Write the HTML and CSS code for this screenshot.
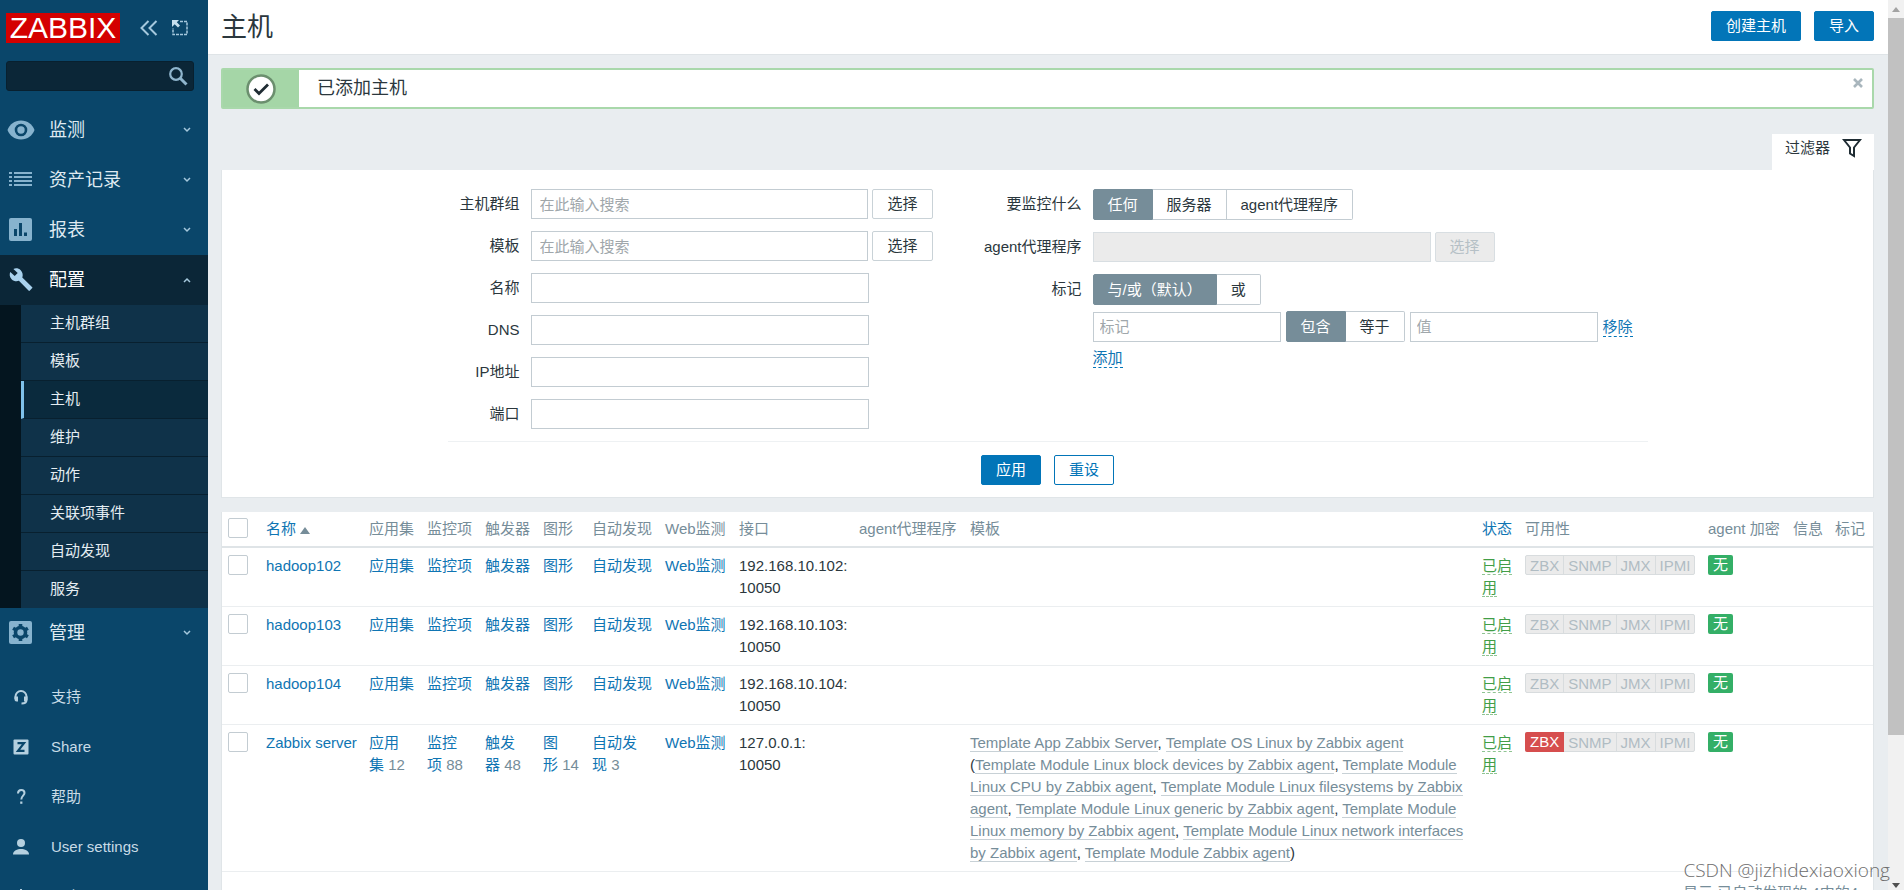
FILE: index.html
```html
<!DOCTYPE html>
<html lang="zh-CN">
<head>
<meta charset="utf-8">
<title>主机</title>
<link rel="stylesheet" href="styles.css">
</head>
<body>
<div class="app">
  <aside class="sidebar">
    <div class="brand">
      <a class="logo" href="#">ZABBIX</a>
      <button class="icon-btn" type="button" aria-label="收起">
        <svg width="20" height="18" viewBox="0 0 20 18"><path d="M9.500 2 2.500 9l7 7M17.500 2l-7 7 7 7" fill="none" stroke="#a5c8dd" stroke-width="2"/></svg>
      </button>
      <button class="icon-btn" type="button" aria-label="隐藏">
        <svg width="18" height="18" viewBox="0 0 18 18"><path d="M9 2.500h7v13H2V9" fill="none" stroke="#a5c8dd" stroke-width="1.500" stroke-dasharray="3 1"/><path d="M1 1h7L5.800 3.200 9 6.500 7 8.500 3.700 5.200 1 8z" fill="#c5dfee"/></svg>
      </button>
    </div>
    <form class="search" role="search">
      <input type="text" aria-label="搜索">
      <button class="search-btn" type="button" aria-label="搜索">
        <svg width="20" height="20" viewBox="0 0 20 20"><circle cx="8" cy="8" r="5.800" fill="none" stroke="#8fb5cd" stroke-width="2.200"/><path d="m12 12 6.500 6.500" stroke="#8fb5cd" stroke-width="3"/></svg>
      </button>
    </form>
    <nav>
      <ul class="menu">
        <li><a class="menu-link" href="#"><svg class="menu-icon" viewBox="0 0 28 28"><path d="M14 4.500C7.500 4.500 2.500 8.500.500 14c2 5.500 7 9.500 13.500 9.500s11.500-4 13.500-9.500c-2-5.500-7-9.500-13.500-9.500z" fill="#87b3ce"/><circle cx="14" cy="14" r="5" fill="none" stroke="#0a466a" stroke-width="2.600"/></svg><span>监测</span><svg class="chev" viewBox="0 0 8 6"><path d="m1 1 3 3 3-3"/></svg></a></li>
        <li><a class="menu-link" href="#"><svg class="menu-icon" viewBox="0 0 28 28"><path d="M2 7h3M2 11h3M2 15h3M2 19h3M7 7h18M7 11h18M7 15h18M7 19h18" stroke="#87b3ce" stroke-width="2"/></svg><span>资产记录</span><svg class="chev" viewBox="0 0 8 6"><path d="m1 1 3 3 3-3"/></svg></a></li>
        <li><a class="menu-link" href="#"><svg class="menu-icon" viewBox="0 0 28 28"><rect x="2" y="2" width="23" height="23" rx="2" fill="#87b3ce"/><path d="M8.500 13v7M13.500 7V20M18.500 16.500V20" stroke="#0a466a" stroke-width="3"/></svg><span>报表</span><svg class="chev" viewBox="0 0 8 6"><path d="m1 1 3 3 3-3"/></svg></a></li>
        <li>
          <a class="menu-link menu-link-open" href="#"><svg class="menu-icon" viewBox="0 0 28 28"><path d="M25 21 15.300 11.500c.9-2.500.4-5.300-1.600-7.300-2-2-4.900-2.400-7.300-1.300l4.300 4.200-3 3L3.300 6c-1.100 2.400-.7 5.200 1.300 7.200s4.900 2.500 7.300 1.600L21.500 24.500c.5.500 1 .5 1.400 0l2.100-2.200c.5-.4.5-1 0-1.300z" fill="#a9d2ee"/></svg><span>配置</span><svg class="chev" viewBox="0 0 8 6"><path d="m1 5 3-3 3 3"/></svg></a>
          <ul class="submenu">
            <li><a href="#">主机群组</a></li>
            <li><a href="#">模板</a></li>
            <li><a class="current" href="#">主机</a></li>
            <li><a href="#">维护</a></li>
            <li><a href="#">动作</a></li>
            <li><a href="#">关联项事件</a></li>
            <li><a href="#">自动发现</a></li>
            <li><a href="#">服务</a></li>
          </ul>
        </li>
        <li><a class="menu-link" href="#"><svg class="menu-icon" viewBox="0 0 28 28"><rect x="2" y="2" width="23" height="23" rx="2" fill="#87b3ce"/><circle cx="13.500" cy="13.500" r="4.800" fill="none" stroke="#0a466a" stroke-width="4"/><path d="M13.500 5v17M6.100 9.200l14.800 8.600M20.900 9.200 6.100 17.800" stroke="#0a466a" stroke-width="3.600"/><circle cx="13.500" cy="13.500" r="3.200" fill="#87b3ce"/></svg><span>管理</span><svg class="chev" viewBox="0 0 8 6"><path d="m1 1 3 3 3-3"/></svg></a></li>
      </ul>
      <ul class="user-menu">
        <li><a href="#"><svg class="user-icon" viewBox="0 0 18 18"><path d="M3.500 11V8.500a5.500 5.500 0 0 1 11 0V12c0 2-1.500 3.500-5 3.500" fill="none" stroke="#b5d0df" stroke-width="2"/><path d="M2.500 8.500H6v5H4.500a2 2 0 0 1-2-2zM12 8.500h3.500v3a2 2 0 0 1-2 2H12z" fill="#b5d0df"/></svg>支持</a></li>
        <li><a href="#"><svg class="user-icon" viewBox="0 0 18 18"><rect x="1.500" y="1.500" width="15" height="15" rx="1" fill="#b5d0df"/><path d="M5.500 5.200h6.500L6 12.800h6.500" fill="none" stroke="#0a466a" stroke-width="2.200"/></svg>Share</a></li>
        <li><a href="#"><svg class="user-icon" viewBox="0 0 18 18"><path d="M6 5.500C6 3 7.500 2 9.200 2c1.800 0 3.300 1 3.300 3 0 2.500-3.200 3-3.200 6.500" fill="none" stroke="#b5d0df" stroke-width="2"/><path d="M8.200 13.500h2.200v2.300H8.200z" fill="#b5d0df"/></svg>帮助</a></li>
        <li><a href="#"><svg class="user-icon" viewBox="0 0 18 18"><circle cx="9" cy="5" r="4" fill="#b5d0df"/><path d="M1 16.500c0-4 4.500-5.500 8-5.500s8 1.500 8 5.500z" fill="#b5d0df"/></svg>User settings</a></li>
        <li><a href="#"><svg class="user-icon" viewBox="0 0 18 18"><path d="M9 1v8M5 4a6 6 0 1 0 8 0" fill="none" stroke="#b5d0df" stroke-width="2"/></svg>退出</a></li>
      </ul>
    </nav>
  </aside>

  <main class="main">
    <header class="page-head">
      <h1>主机</h1>
      <div class="head-actions">
        <button class="btn btn-primary" type="button">创建主机</button>
        <button class="btn btn-primary" type="button">导入</button>
      </div>
    </header>

    <div class="content">
      <div class="message" role="status">
        <div class="message-icon">
          <svg width="32" height="32" viewBox="0 0 32 32"><circle cx="16" cy="16" r="13.500" fill="#fff" stroke="#6b8f6e" stroke-width="2.500"/><path d="m9.500 16 4.500 4.500 9-9" fill="none" stroke="#1f2c33" stroke-width="2.800"/></svg>
        </div>
        <span class="message-text">已添加主机</span>
        <button class="message-close" type="button" aria-label="关闭"><svg width="10" height="10" viewBox="0 0 10 10"><path d="m1 1 8 8M9 1 1 9" stroke="#a9b6bd" stroke-width="2.600"/></svg></button>
      </div>

      <div class="filter-tab">
        <a href="#">过滤器
          <svg width="20" height="20" viewBox="0 0 20 20"><path d="M2 2h16l-6 7.500V18l-4-2.500v-6z" fill="none" stroke="#1f2c33" stroke-width="2"/></svg>
        </a>
      </div>

      <form class="filter">
        <div class="filter-body">
          <div class="filter-col">
            <div class="row"><label for="groups">主机群组</label><div class="field"><input class="text wide" id="groups" type="text" placeholder="在此输入搜索"><button class="btn btn-grey" type="button">选择</button></div></div>
            <div class="row"><label for="templates">模板</label><div class="field"><input class="text wide" id="templates" type="text" placeholder="在此输入搜索"><button class="btn btn-grey" type="button">选择</button></div></div>
            <div class="row"><label for="name">名称</label><div class="field"><input class="text wide" id="name" type="text"></div></div>
            <div class="row"><label for="dns">DNS</label><div class="field"><input class="text wide" id="dns" type="text"></div></div>
            <div class="row"><label for="ip">IP地址</label><div class="field"><input class="text wide" id="ip" type="text"></div></div>
            <div class="row"><label for="port">端口</label><div class="field"><input class="text wide" id="port" type="text"></div></div>
          </div>
          <div class="filter-col filter-col-right">
            <div class="row"><span class="label">要监控什么</span>
              <div class="segment" role="radiogroup" aria-label="要监控什么">
                <input type="radio" name="mon" id="mon-any" checked><label for="mon-any">任何</label>
                <input type="radio" name="mon" id="mon-server"><label for="mon-server">服务器</label>
                <input type="radio" name="mon" id="mon-proxy"><label for="mon-proxy">agent代理程序</label>
              </div>
            </div>
            <div class="row"><label for="proxy">agent代理程序</label><div class="field"><input class="text wide" id="proxy" type="text" disabled><button class="btn btn-grey" type="button" disabled>选择</button></div></div>
            <div class="row row-tags"><span class="label">标记</span>
              <div class="tags">
                <div class="segment" role="radiogroup" aria-label="标记">
                  <input type="radio" name="eval" id="eval-and" checked><label for="eval-and">与/或（默认）</label>
                  <input type="radio" name="eval" id="eval-or"><label for="eval-or">或</label>
                </div>
                <div class="tag-row">
                  <input class="text short" type="text" placeholder="标记" aria-label="标记">
                  <div class="segment" role="radiogroup" aria-label="运算符">
                    <input type="radio" name="op" id="op-like" checked><label for="op-like">包含</label>
                    <input type="radio" name="op" id="op-eq"><label for="op-eq">等于</label>
                  </div>
                  <input class="text short" type="text" placeholder="值" aria-label="值">
                  <button class="link-btn" type="button">移除</button>
                </div>
                <button class="link-btn" type="button">添加</button>
              </div>
            </div>
          </div>
        </div>
        <div class="filter-foot">
          <button class="btn btn-primary" type="button">应用</button>
          <button class="btn btn-outline" type="button">重设</button>
        </div>
      </form>

      <div class="list">
        <table class="hosts">
          <colgroup>
            <col class="c-check"><col class="c-name"><col class="c-item"><col class="c-item"><col class="c-item"><col class="c-graph"><col class="c-disc"><col class="c-web"><col class="c-iface"><col class="c-proxy"><col class="c-tpl"><col class="c-status"><col class="c-avail"><col class="c-enc"><col class="c-info"><col class="c-tags">
          </colgroup>
          <thead>
            <tr>
              <th><input type="checkbox" aria-label="全选"></th>
              <th><a href="#">名称 <span class="sort"></span></a></th>
              <th>应用集</th><th>监控项</th><th>触发器</th><th>图形</th><th>自动发现</th><th>Web监测</th><th>接口</th><th>agent代理程序</th><th>模板</th>
              <th><a href="#">状态</a></th><th>可用性</th><th>agent 加密</th><th>信息</th><th>标记</th>
            </tr>
          </thead>
          <tbody>
            <tr>
              <td><input type="checkbox" aria-label="hadoop102"></td>
              <td><a href="#">hadoop102</a></td>
              <td><a href="#">应用集</a></td><td><a href="#">监控项</a></td><td><a href="#">触发器</a></td><td><a href="#">图形</a></td><td><a href="#">自动发现</a></td><td><a href="#">Web监测</a></td>
              <td>192.168.10.102:<br>10050</td><td></td><td></td>
              <td><a class="enabled" href="#">已启用</a></td>
              <td><span class="avail"><span>ZBX</span><span>SNMP</span><span>JMX</span><span>IPMI</span></span></td>
              <td><span class="enc">无</span></td><td></td><td></td>
            </tr>
            <tr>
              <td><input type="checkbox" aria-label="hadoop103"></td>
              <td><a href="#">hadoop103</a></td>
              <td><a href="#">应用集</a></td><td><a href="#">监控项</a></td><td><a href="#">触发器</a></td><td><a href="#">图形</a></td><td><a href="#">自动发现</a></td><td><a href="#">Web监测</a></td>
              <td>192.168.10.103:<br>10050</td><td></td><td></td>
              <td><a class="enabled" href="#">已启用</a></td>
              <td><span class="avail"><span>ZBX</span><span>SNMP</span><span>JMX</span><span>IPMI</span></span></td>
              <td><span class="enc">无</span></td><td></td><td></td>
            </tr>
            <tr>
              <td><input type="checkbox" aria-label="hadoop104"></td>
              <td><a href="#">hadoop104</a></td>
              <td><a href="#">应用集</a></td><td><a href="#">监控项</a></td><td><a href="#">触发器</a></td><td><a href="#">图形</a></td><td><a href="#">自动发现</a></td><td><a href="#">Web监测</a></td>
              <td>192.168.10.104:<br>10050</td><td></td><td></td>
              <td><a class="enabled" href="#">已启用</a></td>
              <td><span class="avail"><span>ZBX</span><span>SNMP</span><span>JMX</span><span>IPMI</span></span></td>
              <td><span class="enc">无</span></td><td></td><td></td>
            </tr>
            <tr>
              <td><input type="checkbox" aria-label="Zabbix server"></td>
              <td><a href="#">Zabbix server</a></td>
              <td><a href="#">应用集</a>&nbsp;<span class="count">12</span></td><td><a href="#">监控项</a>&nbsp;<span class="count">88</span></td><td><a href="#">触发器</a>&nbsp;<span class="count">48</span></td><td><a href="#">图形</a>&nbsp;<span class="count">14</span></td><td><a href="#">自动发现</a>&nbsp;<span class="count">3</span></td><td><a href="#">Web监测</a></td>
              <td>127.0.0.1:<br>10050</td><td></td>
              <td class="templates"><a href="#">Template App Zabbix Server</a>, <a href="#">Template OS Linux by Zabbix agent</a> (<a href="#">Template Module Linux block devices by Zabbix agent</a>, <a href="#">Template Module Linux CPU by Zabbix agent</a>, <a href="#">Template Module Linux filesystems by Zabbix agent</a>, <a href="#">Template Module Linux generic by Zabbix agent</a>, <a href="#">Template Module Linux memory by Zabbix agent</a>, <a href="#">Template Module Linux network interfaces by Zabbix agent</a>, <a href="#">Template Module Zabbix agent</a>)</td>
              <td><a class="enabled" href="#">已启用</a></td>
              <td><span class="avail"><span class="down">ZBX</span><span>SNMP</span><span>JMX</span><span>IPMI</span></span></td>
              <td><span class="enc">无</span></td><td></td><td></td>
            </tr>
          </tbody>
        </table>
        <div class="list-foot">显示 已自动发现的 4中的4</div>
      </div>
    </div>
  </main>

  <div class="scrollbar" aria-hidden="true">
    <svg class="arrow" viewBox="0 0 16 18"><path d="m4 12 4-5 4 5z" fill="#a3a3a3"/></svg>
    <div class="track"><div class="thumb"></div></div>
    <svg class="arrow" viewBox="0 0 16 18"><path d="m4 11 4 5 4-5z" fill="#505050"/></svg>
  </div>
  <div class="watermark">CSDN @jizhidexiaoxiong</div>
</div>
</body>
</html>
```

FILE: styles.css
```css
* { box-sizing: border-box; }

body, button, input {
  font-family: "Liberation Sans", "Noto Sans CJK SC", sans-serif;
  font-size: 15px;
  line-height: 22px;
}

body {
  margin: 0;
  color: #2b373d;
  background: #e9edf0;
}

ul { list-style: none; margin: 0; padding: 0; }
a { color: #0f75b3; text-decoration: none; }
button { cursor: pointer; }

.app {
  display: flex;
  height: 100vh;
  overflow: hidden;
  position: relative;
}

/* Sidebar */
.sidebar {
  flex: none;
  width: 208px;
  background: #0a466a;
}

.brand {
  display: flex;
  align-items: center;
  gap: 12px;
  padding: 13px 0 0 6px;
}

.logo {
  width: 114px;
  margin-right: 7px;
  background: #d40000;
  color: #fff;
  font-size: 30px;
  line-height: 30px;
  text-align: center;
}

.icon-btn, .search-btn, .message-close {
  display: flex;
  padding: 0;
  border: 0;
  background: none;
}

.search {
  display: flex;
  align-items: center;
  height: 30px;
  margin: 18px 14px 14px 6px;
  padding-right: 5px;
  background: #0b2637;
  border: 1px solid #08202f;
  border-radius: 3px;
}

.search input {
  flex: 1;
  min-width: 0;
  border: 0;
  background: none;
  color: #fff;
}

.menu-link {
  display: flex;
  align-items: center;
  height: 50px;
  padding: 0 17px 0 7px;
  color: #dfeaf1;
  font-size: 18px;
}

.menu-link span { flex: 1; margin-left: 14px; }
.menu-link-open { background: #0b2637; color: #fff; }
.menu-icon { width: 28px; height: 28px; }
.chev { width: 8px; height: 6px; fill: none; stroke: #a5c8dd; stroke-width: 1.5; }

.submenu {
  padding-left: 21px;
  background: #04151f;
}

.submenu a {
  display: block;
  height: 38px;
  padding: 7px 0 7px 29px;
  background: #0f3249;
  border-bottom: 1px solid #08202f;
  color: #e4edf2;
}

.submenu li:last-child a { height: 37px; border-bottom: 0; }

.submenu a.current {
  padding-left: 26px;
  background: #0a2a3d;
  border-left: 3px solid #7fc1ea;
}

.user-menu { padding-top: 14px; }

.user-menu a {
  display: flex;
  align-items: center;
  gap: 21px;
  height: 50px;
  padding-left: 12px;
  color: #c8dbe6;
}

.user-icon { width: 18px; height: 18px; }

/* Page */
.main { flex: 1; min-width: 0; }

.page-head {
  display: flex;
  justify-content: space-between;
  align-items: flex-start;
  height: 55px;
  padding: 11px 14px 0 13px;
  background: #fff;
  border-bottom: 1px solid #dfe4e7;
}

h1 { margin: 0; font-size: 26px; font-weight: 400; line-height: 32px; }
.head-actions { display: flex; gap: 13px; }
.content { padding: 13px 14px 0 13px; }

.btn {
  height: 30px;
  min-width: 60px;
  padding: 0 14px;
  border: 1px solid #0275b8;
  border-radius: 2px;
  line-height: 28px;
}

.btn-primary { background: #0275b8; color: #fff; }
.btn-outline { background: #fff; color: #0275b8; }
.btn-grey { background: #fff; border-color: #c9d2d7; color: #2b373d; }
.btn-grey:disabled { background: #ebebeb; border-color: #d8dee2; color: #b5c0c6; }

.message {
  display: flex;
  align-items: stretch;
  height: 41px;
  background: #fff;
  border: 2px solid #a9d8ab;
  border-radius: 2px;
}

.message-icon {
  display: flex;
  align-items: center;
  justify-content: center;
  width: 76px;
  background: #a5d6a7;
}

.message-text { flex: 1; padding-left: 18px; font-size: 18px; line-height: 36px; }
.message-close { padding: 8px 9px; }

.filter-tab { display: flex; justify-content: flex-end; padding-top: 25px; }

.filter-tab a {
  display: flex;
  align-items: center;
  gap: 12px;
  height: 36px;
  padding: 0 12px 8px 13px;
  background: #fff;
  color: #2b373d;
}

.filter { padding: 19px 0 12px; background: #fff; border: 1px solid #e0e5e8; border-top: 0; }

.filter-body {
  display: flex;
  max-width: 1200px;
  margin: 0 auto;
  padding-bottom: 12px;
  border-bottom: 1px solid #eef1f3;
}

.filter-col { display: flex; flex-direction: column; gap: 12px; }
.row { display: flex; gap: 11px; }
.row > label, .row > .label { width: 72px; text-align: right; line-height: 30px; }
.filter-col-right .row > label, .filter-col-right .row > .label { width: 149px; }
.filter-col:first-child { width: 485px; }
.field { display: flex; gap: 4px; }

.text {
  height: 30px;
  padding: 0 8px;
  border: 1px solid #c3ccd2;
  background: #fff;
  border-radius: 0;
  color: #2b373d;
}

.text::placeholder { color: #a0a7ab; }
.text:disabled { background: #ebebeb; border-color: #d8dee2; }
.wide { width: 338px; }
.short { width: 188px; padding: 0 6px; }

.segment { display: flex; position: relative; height: 31px; }
.segment input { position: absolute; opacity: 0; margin: 0; }

.segment label {
  padding: 0 14px;
  border: 1px solid #c3ccd2;
  border-left-width: 0;
  background: #fff;
  line-height: 29px;
}

.segment label:last-child { border-radius: 0 2px 2px 0; }
.segment input:checked + label {
  background: #768d99;
  border-color: #768d99;
  border-left-width: 1px;
  border-radius: 2px 0 0 2px;
  color: #fff;
}

.tags { display: flex; flex-direction: column; align-items: flex-start; gap: 6px; }
.tag-row { display: flex; align-items: center; gap: 5px; }

.link-btn {
  padding: 0;
  border: 0;
  border-bottom: 1px dashed #0275b8;
  background: none;
  color: #0f75b3;
  line-height: 19px;
}

.filter-foot { display: flex; justify-content: center; gap: 13px; padding-top: 13px; }

/* Host list */
.list { margin-top: 14px; background: #fff; border: 1px solid #e0e5e8; border-top: 0; }
.hosts { width: 100%; table-layout: fixed; border-collapse: collapse; }

.c-check { width: 38px; }
.c-name { width: 103px; }
.c-item { width: 58px; }
.c-graph { width: 49px; }
.c-disc { width: 73px; }
.c-web { width: 74px; }
.c-iface { width: 120px; }
.c-proxy { width: 111px; }
.c-status { width: 43px; }
.c-avail { width: 183px; }
.c-enc { width: 85px; }
.c-info { width: 42px; }
.c-tags { width: 44px; }

.hosts th, .hosts td {
  padding: 7px 6px;
  border-bottom: 1px solid #ebeef0;
  text-align: left;
  vertical-align: top;
  font-weight: 400;
}

.hosts th {
  padding: 6px 0 6px 6px;
  border-bottom: 2px solid #dfe4e7;
  color: #768d99;
  white-space: nowrap;
}

.hosts input {
  display: block;
  appearance: none;
  width: 20px;
  height: 20px;
  margin: 0;
  border: 1px solid #c3ccd2;
  border-radius: 2px;
  background: #fff;
}

.sort {
  display: inline-block;
  border: 5px solid transparent;
  border-top: 0;
  border-bottom: 7px solid #768d99;
}

.count { color: #768d99; }
.templates a { color: #768d99; border-bottom: 1px solid #c8d1d6; }
.enabled { color: #429e47; border-bottom: 1px dashed #8fc492; }

.avail {
  display: inline-flex;
  height: 20px;
  vertical-align: top;
  background: #ebebeb;
  border: 1px solid #d8dcde;
  border-radius: 2px;
  color: #b0bcc3;
  line-height: 20px;
}

.avail span { padding: 0 4px; border-right: 1px solid #d8dcde; }
.avail span:last-child { border-right: 0; }
.avail .down { margin: -1px 0 -1px -1px; padding-left: 5px; background: #d64e4e; border-color: #d64e4e; color: #fff; border-radius: 2px 0 0 2px; }

.enc {
  display: inline-block;
  height: 20px;
  padding: 0 5px;
  vertical-align: top;
  background: #34af67;
  border-radius: 2px;
  color: #fff;
  line-height: 20px;
}

.list-foot { padding: 10px 15px; text-align: right; color: #768d99; }

/* Scrollbar */
.scrollbar {
  flex: none;
  display: flex;
  flex-direction: column;
  width: 16px;
  background: #f1f1f1;
}

.arrow { width: 16px; height: 18px; }
.track { flex: 1; }
.thumb { height: 84%; background: #c1c1c1; }

.watermark {
  position: absolute;
  right: 14px;
  bottom: 8px;
  color: #6d6d6d;
  font-family: "Open Sans", "Noto Sans", sans-serif;
  font-size: 19px;
  font-weight: 300;
  line-height: 24px;
}
```
